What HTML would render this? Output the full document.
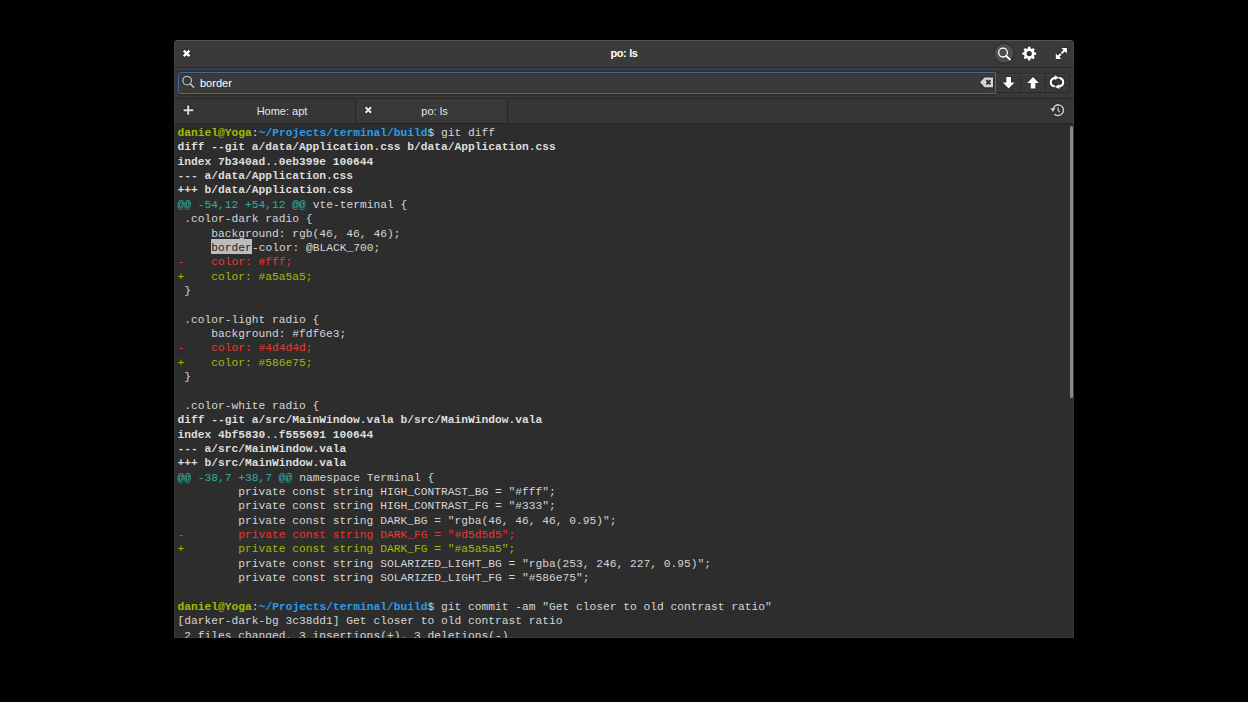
<!DOCTYPE html>
<html><head><meta charset="utf-8">
<style>
html,body{margin:0;padding:0;width:1248px;height:702px;background:#000;overflow:hidden}
#win{position:absolute;left:174px;top:40px;width:900px;height:598px;border-radius:4px 4px 0 0;overflow:hidden;background:#2d2d2d}
#hdr{position:absolute;left:0;top:0;width:900px;height:27px;background:#3a3a3a;border-bottom:1px solid #262626}
#tb{position:absolute;left:0;top:28px;width:900px;height:30px;background:#383838;border-bottom:1px solid #262626;box-shadow:inset 0 1px 0 #414141}
#tabs{position:absolute;left:0;top:59px;width:900px;height:24px;background:#363636;border-bottom:1px solid #232323;box-shadow:inset 0 -1px 0 #393939}
#term{position:absolute;left:0;top:84px;width:900px;height:514px;background:#2d2d2d}
.title{position:absolute;left:0;width:900px;top:7px;text-align:center;font:bold 11px "Liberation Sans",sans-serif;color:#fff;letter-spacing:-0.35px}
pre{margin:0;position:absolute;left:3.6px;top:2px;font-family:"Liberation Mono",monospace;font-size:11.255px;line-height:14.36px;color:#d5d5d5}
#entry{position:absolute;left:4px;top:4px;width:816px;height:20px;border:1px solid #3a6c9e;border-radius:3px 0 0 3px;background:#3a3a3a;box-shadow:inset 0 1px 0 #36312d,inset 0 -1px 0 #3c3834,0 -1px 0 #312d2a,0 1px 0 #302c29,0 2px 0 #332f2c}
.etext{position:absolute;left:21px;top:4px;font:11px "Liberation Sans",sans-serif;color:#fff}
#bgrp{position:absolute;left:822px;top:5px;width:73px;height:19px}
.btn{position:absolute;top:0;width:24px;height:20px;border:1px solid #2b2b2b;box-sizing:border-box;background:#393939;box-shadow:inset 0 1px 0 #424242}
#atab{position:absolute;left:181px;top:0;width:153px;height:24px;background:#393939;border-left:1px solid #262626;border-right:1px solid #262626;box-sizing:border-box;border-radius:3px 3px 0 0}
.tlabel{position:absolute;top:6px;text-align:center;font:11px "Liberation Sans",sans-serif;color:#e6e6e6}
#ovl{position:absolute;left:0;top:0;width:900px;height:598px;box-sizing:border-box;border:1px solid rgba(255,255,255,0.06);border-top-color:rgba(255,255,255,0.13);border-radius:4px 4px 0 0;z-index:9}
#sb{position:absolute;z-index:5;left:896px;top:86px;width:3px;height:272px;border-radius:1.5px;background:#8a8a8a}
svg{filter:drop-shadow(0 0 0.8px rgba(0,0,0,0.55))}
.b{font-weight:bold}
.g{color:#a2bc00}
.bl{color:#2a9cec}
.c{color:#2cb0a2}
.r{color:#f0352e}
.w{color:#dedede;font-weight:bold}
.hl{color:#262626}
#hlbox{position:absolute;left:37px;top:115px;width:41px;height:15px;background:#bdbdbd}
</style></head><body>
<div id="win">
  <div id="hdr">
    <div class="title">po: ls</div>
    <svg style="position:absolute;left:0;top:0" width="900" height="27">
      <path d="M9.8 10.6 L15.4 16.2 M15.4 10.6 L9.8 16.2" stroke="#fff" stroke-width="2.5"/>
      <circle cx="830" cy="13.4" r="9.3" fill="#4e4e4e"/>
      <circle cx="829" cy="12.6" r="4.4" fill="none" stroke="#fff" stroke-width="1.3"/>
      <path d="M832.1 15.8 L836 19.5" stroke="#fff" stroke-width="1.8" stroke-linecap="round"/>
      <path transform="translate(855.2,13.6)" fill="#fff" fill-rule="evenodd" d="M-1.44 -5.20 L-1.16 -6.90 L1.16 -6.90 L1.44 -5.20 L2.66 -4.70 L4.06 -5.70 L5.70 -4.06 L4.70 -2.66 L5.20 -1.44 L6.90 -1.16 L6.90 1.16 L5.20 1.44 L4.70 2.66 L5.70 4.06 L4.06 5.70 L2.66 4.70 L1.44 5.20 L1.16 6.90 L-1.16 6.90 L-1.44 5.20 L-2.66 4.70 L-4.06 5.70 L-5.70 4.06 L-4.70 2.66 L-5.20 1.44 L-6.90 1.16 L-6.90 -1.16 L-5.20 -1.44 L-4.70 -2.66 L-5.70 -4.06 L-4.06 -5.70 L-2.66 -4.70 Z M2.6 0 A2.6 2.6 0 1 0 -2.6 0 A2.6 2.6 0 1 0 2.6 0 Z"/>
      <path d="M892.9 7.9 L892.9 13.4 L887.4 7.9 Z M881.8 19.1 L881.8 13.6 L887.3 19.1 Z" fill="#fff"/>
      <path d="M890.6 10.2 L887.6 13.2 M884.1 16.8 L886.9 14" stroke="#fff" stroke-width="2.1"/>
    </svg>
  </div>
  <div id="tb">
    <div id="entry">
      <svg style="position:absolute;left:-1px;top:-1px" width="20" height="21">
        <circle cx="9.1" cy="8.6" r="4.3" fill="none" stroke="#bcbcbc" stroke-width="1.3"/>
        <path d="M12.2 11.8 L15.6 15.2" stroke="#bcbcbc" stroke-width="1.7" stroke-linecap="round"/>
      </svg>
      <div class="etext">border</div>
      <svg style="position:absolute;left:801px;top:4px" width="15" height="12">
        <path d="M0 5.3 L4.6 0.5 L13 0.5 L13 10.2 L4.6 10.2 Z" fill="#d4d4d4"/>
        <path d="M6.4 3.2 L10.4 7.4 M10.4 3.2 L6.4 7.4" stroke="#262626" stroke-width="1.8"/>
      </svg>
    </div>
    <div id="bgrp">
      <div class="btn" style="left:0;border-left:none;width:25px"></div><div class="btn" style="left:25px;border-left:none;width:25px"></div><div class="btn" style="left:50px;border-left:none;width:24px;border-radius:0 3px 3px 0"></div>
      <svg style="position:absolute;left:0;top:0" width="73" height="20">
        <path d="M10.3 4 L15 4 L15 9.6 L18.5 9.6 L12.65 15.6 L6.8 9.6 L10.3 9.6 Z" fill="#fff"/>
        <path d="M34.7 15.6 L39.4 15.6 L39.4 10 L42.9 10 L37.05 4 L31.2 10 L34.7 10 Z" fill="#fff"/>
        <path d="M59.71 4.60 A6.2 4.7 0 0 0 58.68 13.56 M63.12 13.62 A6.2 4.7 0 0 0 63.12 4.78" fill="none" stroke="#fff" stroke-width="2.1"/>
        <path d="M58.6 2.2 L63.3 4.65 L58.6 7.1 Z M63.4 11.3 L58.7 13.7 L63.4 16.1 Z" fill="#fff"/>
      </svg>
    </div>
  </div>
  <div id="tabs">
    <div id="atab"></div>
    <svg style="position:absolute;left:0;top:0" width="900" height="24">
      <path d="M9.6 11.2 L19.2 11.2 M14.2 6.6 L14.2 15.8" stroke="#dcdcdc" stroke-width="2"/>
      <path d="M191.6 8.3 L197.1 13.8 M197.1 8.3 L191.6 13.8" stroke="#e8e8e8" stroke-width="2.1"/>
      <path d="M878.9 11 A5.3 5.3 0 1 1 880.4 14.9" fill="none" stroke="#c8c8c8" stroke-width="1.5"/>
      <path d="M876.2 9.2 L881.6 9.2 L878.9 13.1 Z" fill="#c8c8c8"/>
      <path d="M884.1 8.2 L884.1 11.3 L886 13.4" fill="none" stroke="#c8c8c8" stroke-width="1.3"/>
    </svg>
    <div class="tlabel" style="left:27px;width:162px">Home: apt</div>
    <div class="tlabel" style="left:184px;width:153px">po: ls</div>
  </div>
  <div id="sb"></div>
  <div id="ovl"></div>
<div id="term">
<div id="hlbox"></div>
<pre>
<span class="b g">daniel@Yoga</span>:<span class="b bl">~/Projects/terminal/build</span>$ git diff
<span class="w">diff --git a/data/Application.css b/data/Application.css</span>
<span class="w">index 7b340ad..0eb399e 100644</span>
<span class="w">--- a/data/Application.css</span>
<span class="w">+++ b/data/Application.css</span>
<span class="c">@@ -54,12 +54,12 @@</span> vte-terminal {
 .color-dark radio {
     background: rgb(46, 46, 46);
     <span class="hl">border</span>-color: @BLACK_700;
<span class="r">-    color: #fff;</span>
<span class="g">+    color: #a5a5a5;</span>
 }

 .color-light radio {
     background: #fdf6e3;
<span class="r">-    color: #4d4d4d;</span>
<span class="g">+    color: #586e75;</span>
 }

 .color-white radio {
<span class="w">diff --git a/src/MainWindow.vala b/src/MainWindow.vala</span>
<span class="w">index 4bf5830..f555691 100644</span>
<span class="w">--- a/src/MainWindow.vala</span>
<span class="w">+++ b/src/MainWindow.vala</span>
<span class="c">@@ -38,7 +38,7 @@</span> namespace Terminal {
         private const string HIGH_CONTRAST_BG = "#fff";
         private const string HIGH_CONTRAST_FG = "#333";
         private const string DARK_BG = "rgba(46, 46, 46, 0.95)";
<span class="r">-        private const string DARK_FG = "#d5d5d5";</span>
<span class="g">+        private const string DARK_FG = "#a5a5a5";</span>
         private const string SOLARIZED_LIGHT_BG = "rgba(253, 246, 227, 0.95)";
         private const string SOLARIZED_LIGHT_FG = "#586e75";

<span class="b g">daniel@Yoga</span>:<span class="b bl">~/Projects/terminal/build</span>$ git commit -am "Get closer to old contrast ratio"
[darker-dark-bg 3c38dd1] Get closer to old contrast ratio
 2 files changed, 3 insertions(+), 3 deletions(-)
</pre>
  </div>
</div>
</body></html>
